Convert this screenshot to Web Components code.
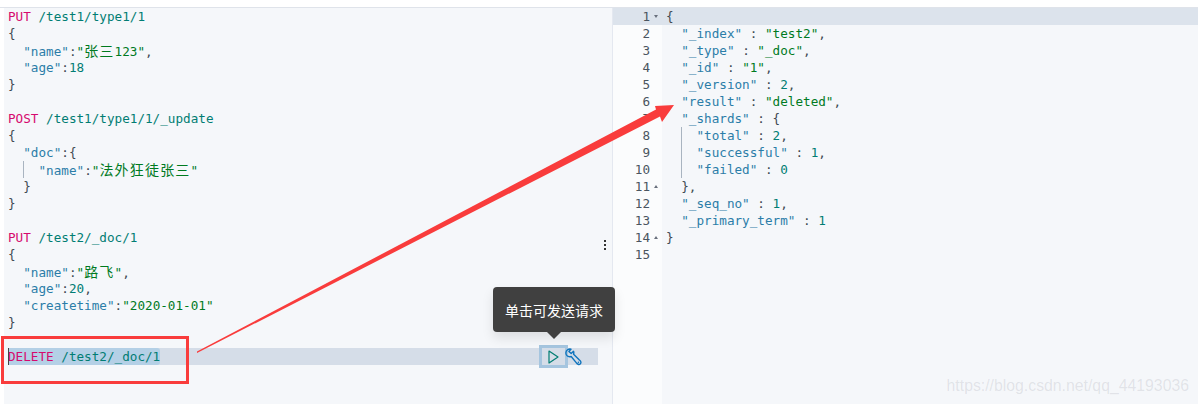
<!DOCTYPE html>
<html>
<head>
<meta charset="utf-8">
<style>
html, body { margin: 0; padding: 0; background: #fff; }
body { width: 1198px; height: 404px; overflow: hidden; }
</style>
</head>
<body>
<console-app>
	<code-pane slot="left" id="request"></code-pane>
	<output-pane slot="right" id="response"></output-pane>
	<send-tooltip slot="overlay" text="单击可发送请求"></send-tooltip>
	<red-notes slot="overlay"></red-notes>
</console-app>

<script>
const CODE_FONT = `"DejaVu Sans Mono", "Noto Sans CJK SC", monospace`;

// turns one raw line into coloured spans
function colourLine(text) {
	const safe = text.replace(/&/g, '&amp;').replace(/</g, '&lt;');
	const method = safe.match(/^(PUT|POST|DELETE)( .*)$/);
	if (method) {
		return `<span class="m">${method[1]}</span><span class="u">${method[2]}</span>`;
	}
	const html = safe.replace(/("[^"]*")(\s*:\s*)?|([{}])|([,:])|(\b\d+\b)/g, (all, str, colon, brace, punc, num) => {
		if (str) {
			if (colon) return `<span class="k">${str}</span><span class="p">${colon}</span>`;
			return `<span class="s">${str}</span>`;
		}
		if (brace) return `<span class="b">${brace}</span>`;
		if (punc) return `<span class="p">${punc}</span>`;
		return `<span class="n">${num}</span>`;
	});
	return html.replace(/[\u4e00-\u9fff]+/g, (cjk) => `<span class="cjk">${cjk}</span>`);
}

const lineStyles = `
	.line { height: 17px; line-height: 17px; white-space: pre; position: relative; }
	.m { color: #d60a6e; }
	.u { color: #017d73; }
	.k { color: #2b7da8; }
	.s { color: #007a1f; }
	.n { color: #017d73; }
	.p { color: #3f4a52; }
	.b { color: #3f4a52; }
	.cjk { font-family: "Noto Sans CJK SC", sans-serif; font-size: 14px; letter-spacing: 1.2px; }
	.guide { position: absolute; top: 0; bottom: 0; width: 1px; background: #a9b4c0; }
`;

class ConsoleApp extends HTMLElement {
	constructor() {
		super();
		this.attachShadow({ mode: 'open' });
		this.shadowRoot.innerHTML = `
			<style>
				:host { display: block; position: relative; width: 1198px; height: 404px; }
				.top { height: 7px; background: #fff; border-bottom: 1px solid #dfe3ea; }
				.panes { display: flex; height: 396px; }
				.left { width: 598px; flex: none; padding-left: 4px; box-sizing: border-box; }
				.gap { width: 15px; flex: none; background: #f5f7fa; border-right: 1px solid #e4e8f0; box-sizing: border-box;
					display: flex; justify-content: center; padding-top: 232px; }
				.gap i { display: block; width: 2px; height: 2px; background: #333; box-shadow: 0 4px 0 #333, 0 8px 0 #333; }
				.right { flex: 1; min-width: 0; }
			</style>
			<div class="top"></div>
			<div class="panes">
				<div class="left"><slot name="left"></slot></div>
				<div class="gap"><i></i></div>
				<div class="right"><slot name="right"></slot></div>
			</div>
			<slot name="overlay"></slot>
		`;
	}
}

class CodePane extends HTMLElement {
	constructor() {
		super();
		this.attachShadow({ mode: 'open' });
		const lines = [
			'PUT /test1/type1/1', '{', '  "name":"张三123",', '  "age":18', '}', '',
			'POST /test1/type1/1/_update', '{', '  "doc":{', '    "name":"法外狂徒张三"', '  }', '}', '',
			'PUT /test2/_doc/1', '{', '  "name":"路飞",', '  "age":20,', '  "createtime":"2020-01-01"', '}', ''
		];
		const rows = lines.map((l, i) => {
			const guide = i === 9 ? '<span class="guide" style="left:15px"></span>' : '';
			return `<div class="line">${guide}${colourLine(l)}</div>`;
		}).join('');
		this.shadowRoot.innerHTML = `
			<style>
				:host { display: block; height: 100%; background: #f5f7fa; padding: 0 0 0 4px; box-sizing: border-box;
					font: 12.65px ${CODE_FONT}; }
				${lineStyles}
				.active { background: #d5dde8; display: flex; align-items: center; height: 17px; position: relative; }
				.sel { background: #b4d0e6; height: 17px; line-height: 17px; white-space: pre; border-radius: 0 3px 3px 0; }
				.cursor { position: absolute; left: 0; top: 0; width: 1px; height: 17px; background: #444; }
				.tools { margin-left: auto; margin-right: 16px; display: flex; align-items: center; }
				.play { width: 29px; height: 23px; box-sizing: border-box; border: 3px solid #a5c5df; display: flex; align-items: center; justify-content: center; margin: -3px -3px -3px 0; }
				.wrench { position: relative; }
			</style>
			${rows}
			<div class="active">
				<span class="cursor"></span>
				<span class="sel">${colourLine('DELETE /test2/_doc/1')}</span>
				<span class="tools">
					<span class="play">
						<svg width="11" height="14" viewBox="0 0 11 14"><path d="M1 1 L10 7 L1 13 Z" fill="none" stroke="#017d73" stroke-width="1.2" stroke-linejoin="round"/></svg>
					</span>
					<svg class="wrench" width="17" height="18" viewBox="0 0 17 18" fill="none" stroke="#0f74bd" stroke-width="1.4" stroke-linejoin="round">
						<path d="M6 1.2 C3.6 0.4 1 2.2 0.9 4.8 C0.8 6.9 2.5 8.7 4.6 8.8 C5.2 8.8 5.7 8.7 6.2 8.5 L11.2 14.6 C12.2 16.2 14 17 15.2 16 C16.5 14.9 15.9 13 14.4 12 L8.6 6.2 C8.9 5.2 8.9 4.2 8.5 3.3 L6.2 5.6 L3.9 3.4 Z"/>
						<circle cx="13.4" cy="14.3" r="0.8" fill="#0f74bd" stroke="none"/>
					</svg>
				</span>
			</div>
		`;
	}
}

class OutputPane extends HTMLElement {
	constructor() {
		super();
		this.attachShadow({ mode: 'open' });
		const lines = [
			'{', '  "_index" : "test2",', '  "_type" : "_doc",', '  "_id" : "1",', '  "_version" : 2,',
			'  "result" : "deleted",', '  "_shards" : {', '    "total" : 2,', '    "successful" : 1,',
			'    "failed" : 0', '  },', '  "_seq_no" : 1,', '  "_primary_term" : 1', '}', ''
		];
		const folds = { 0: 'down', 10: 'up', 13: 'up' };
		const gutter = lines.map((l, i) => {
			const f = folds[i] ? `<i class="${folds[i]}"></i>` : '';
			return `<div class="num">${i + 1}${f}</div>`;
		}).join('');
		const code = lines.map((l, i) => {
			const guide = i >= 7 && i <= 9 ? '<span class="guide" style="left:15px"></span>' : '';
			return `<div class="line">${guide}${colourLine(l)}</div>`;
		}).join('');
		this.shadowRoot.innerHTML = `
			<style>
				:host { display: flex; height: 100%; background: #f5f7fa; font: 12.65px ${CODE_FONT}; position: relative; }
				${lineStyles}
				.gutter { width: 49px; flex: none; background: #fbfcfd; }
				.num { height: 17px; line-height: 17px; color: #4a5560; text-align: right; padding-right: 12px; position: relative; }
				.num i { position: absolute; right: 4px; width: 0; height: 0; border-left: 2.5px solid transparent; border-right: 2.5px solid transparent; }
				.num i.down { top: 7px; border-top: 3px solid #69707d; }
				.num i.up { top: 7px; border-bottom: 3px solid #69707d; }
				.num:first-child { background: #dce3ec; }
				.code { flex: 1; padding-left: 4px; }
				.code .line:first-child { background: #dce3ec; margin-left: -4px; padding-left: 4px; }
			</style>
			<div class="gutter">${gutter}</div>
			<div class="code">${code}</div>
		`;
	}
}

class SendTooltip extends HTMLElement {
	constructor() {
		super();
		this.attachShadow({ mode: 'open' });
		this.shadowRoot.innerHTML = `
			<style>
				:host { display: block; position: absolute; left: 493px; top: 287px; width: 122px; height: 45px; }
				.tip { height: 45px; box-sizing: border-box; background: #404040; border-radius: 4px; color: #fff;
					font: 14px "Noto Sans CJK SC", "Noto Sans", sans-serif; display: flex; align-items: center; justify-content: center;
					box-shadow: 0 6px 12px rgba(0,0,0,.1); }
				.tip::after { content: ""; position: absolute; left: 54px; top: 45px; border: 7px solid transparent; border-top-color: #404040; border-bottom: 0; }
			</style>
			<div class="tip"></div>
		`;
		this.shadowRoot.querySelector('.tip').textContent = this.getAttribute('text');
	}
}

class RedNotes extends HTMLElement {
	constructor() {
		super();
		this.attachShadow({ mode: 'open' });
		this.shadowRoot.innerHTML = `
			<style>
				:host { display: block; position: absolute; inset: 0; pointer-events: none; }
				svg { position: absolute; left: 0; top: 0; }
				.mark { position: absolute; right: 9px; bottom: 9px; color: rgba(120,125,135,.17);
					font: 15.8px "Liberation Sans", sans-serif; }
			</style>
			<svg width="1198" height="404" fill="#f93c3c">
				<rect x="2.5" y="337.5" width="185" height="45" fill="none" stroke="#f93c3c" stroke-width="3"/>
				<path d="M197 351.5 L656 109.5 L655 106 L674 105 L662 122 L660 116.5 L197 353 Z"/>
			</svg>
			<div class="mark">https://blog.csdn.net/qq_44193036</div>
		`;
	}
}

customElements.define('console-app', ConsoleApp);
customElements.define('code-pane', CodePane);
customElements.define('output-pane', OutputPane);
customElements.define('send-tooltip', SendTooltip);
customElements.define('red-notes', RedNotes);
</script>
</body>
</html>
